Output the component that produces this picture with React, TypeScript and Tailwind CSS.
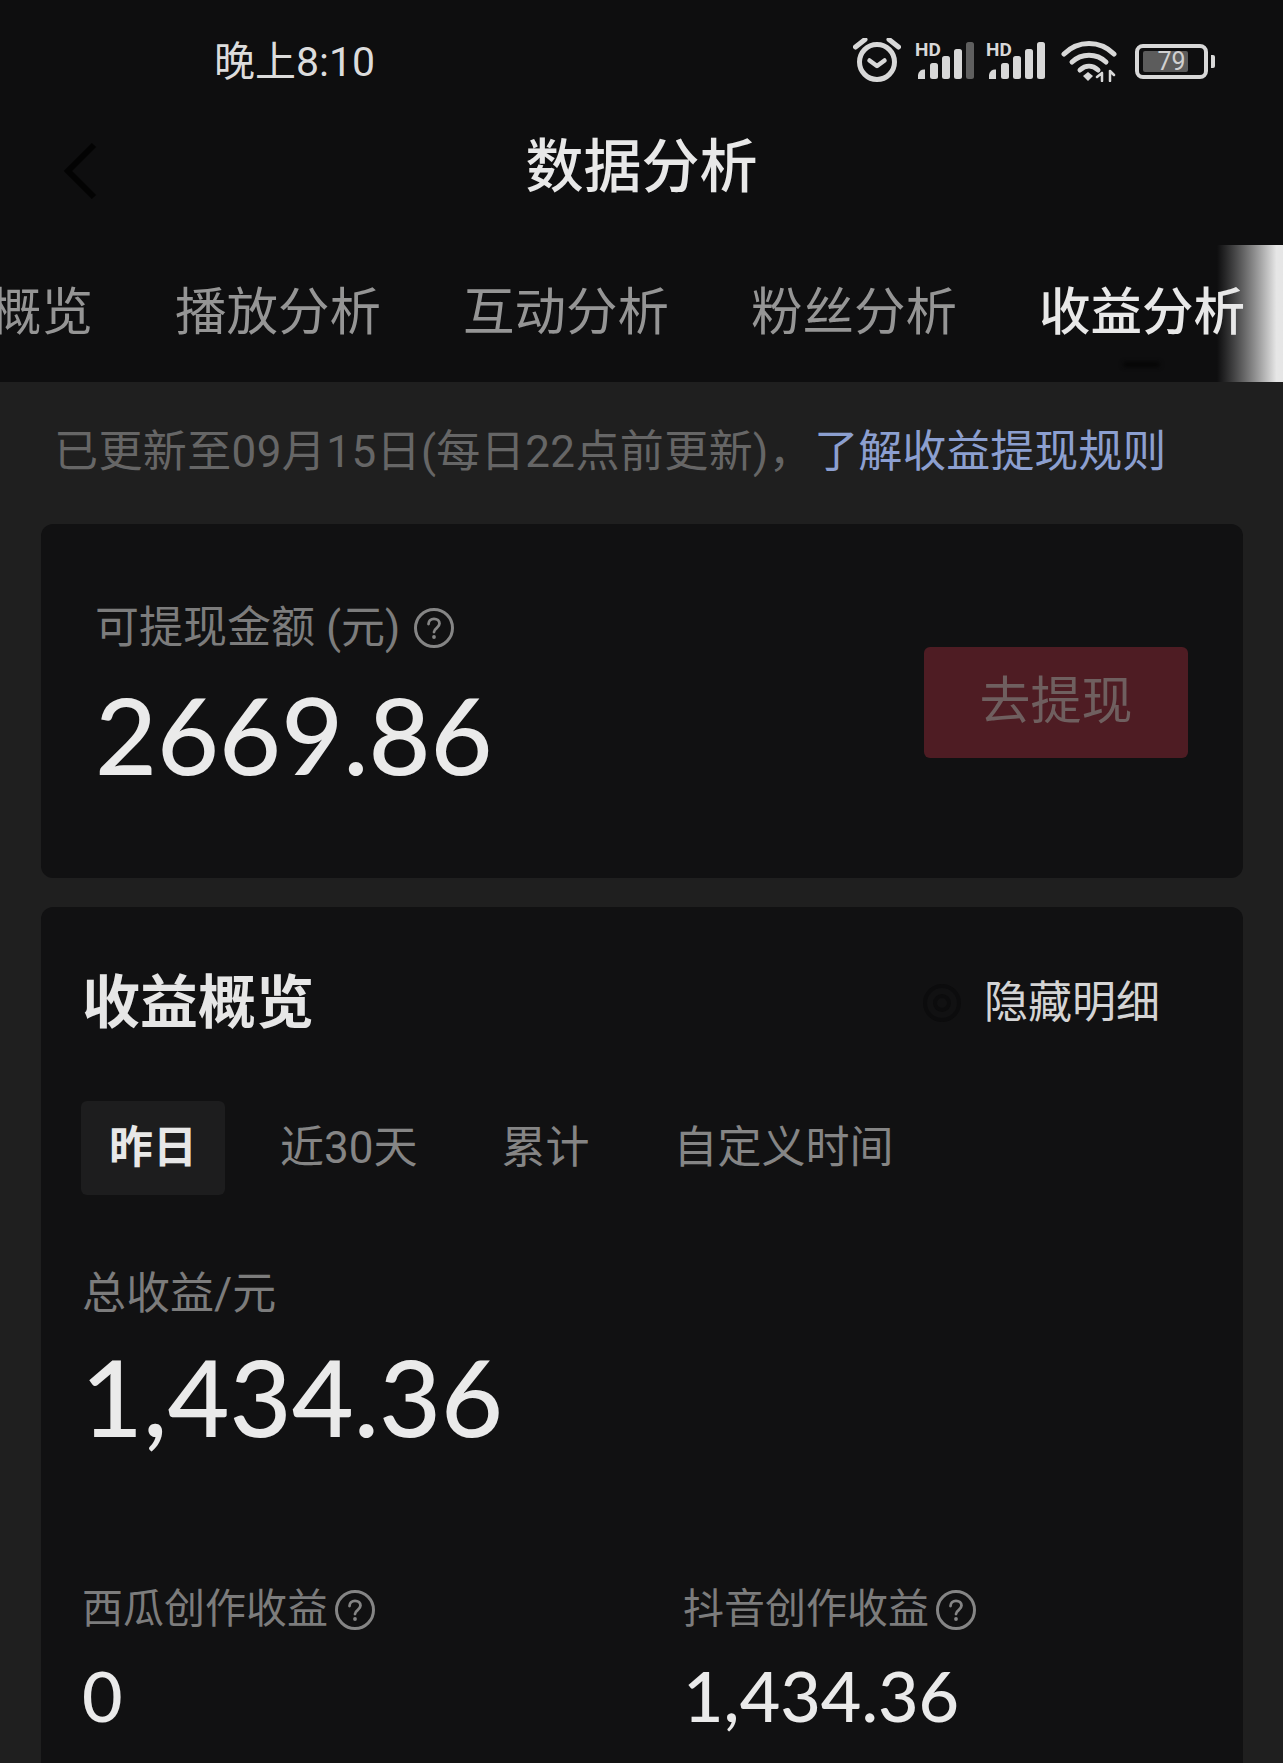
const cjk = "font-['Roboto','Noto_Sans_CJK_SC',sans-serif]";

function Help({ size = 40 }: { size?: number }) {
  return (
    <svg width={size} height={size} viewBox="0 0 40 40" fill="none" className="shrink-0">
      <circle cx="20" cy="20" r="18.500" stroke="#858585" strokeWidth="3" />
      <path d="M14.500 16c0-3.200 2.400-5.200 5.500-5.200s5.500 2 5.500 4.800c0 4.400-5.500 4.400-5.500 8.400" stroke="#858585" strokeWidth="2.800" strokeLinecap="round" />
      <circle cx="20" cy="29" r="1.900" fill="#858585" />
    </svg>
  );
}

function Signal({ dim }: { dim?: boolean }) {
  return (
    <svg width="60" height="38" viewBox="0 0 60 38" className="overflow-visible">
      <text x="0" y="14" fontFamily="Roboto, sans-serif" fontWeight="700" fontSize="19" fill="#d8d8d8">HD</text>
      <path d="M3 37v-4a6 6 0 0 1 7-5.500V37z" fill="#d8d8d8" />
      <rect x="15" y="21" width="8" height="16" rx="2.500" fill="#d8d8d8" />
      <rect x="27" y="14" width="8" height="23" rx="2.500" fill="#d8d8d8" />
      <rect x="39" y="7" width="8" height="30" rx="2.500" fill="#d8d8d8" />
      <rect x="51" y="0" width="8" height="37" rx="2.500" fill={dim ? "#5f5f5f" : "#d8d8d8"} />
    </svg>
  );
}

function StatusIcons() {
  return (
    <div className="flex items-center">
      <svg width="48" height="46" viewBox="0 2 48 46" fill="none" stroke="#d8d8d8" strokeLinecap="round">
        <circle cx="24" cy="26" r="17.500" strokeWidth="5" />
        <path d="M16.500 24.500 24 30l7.500-5.500" strokeWidth="4.500" strokeLinejoin="round" />
        <path d="M2.500 11 12 3.500M45.500 11 36 3.500" strokeWidth="5" />
      </svg>
      <div className="ml-[14px]"><Signal dim /></div>
      <div className="ml-[11px]"><Signal /></div>
      <svg className="ml-[15px]" width="56" height="42" viewBox="0 0 56 42" fill="none" stroke="#d8d8d8" strokeLinecap="round">
        <path d="M3 14C17 0 39 0 53 14" strokeWidth="5" />
        <path d="M11 22c9.500-9 24.500-9 34 0" strokeWidth="5" />
        <path d="M19 30c5.500-5 12.500-5 18 0" strokeWidth="5" />
        <path d="M22 36l5-4 5 4-5 5z" fill="#d8d8d8" stroke="none" />
        <path d="M41 33v8M36 37l5-4M49 31v10M49 31l4 4" strokeWidth="2.500" />
      </svg>
      <div className="relative ml-[18px] w-[73px] h-[35px] rounded-[8px] border-[4px] border-[#d8d8d8] flex items-center justify-center">
        <div className="absolute left-[4px] top-[3px] bottom-[3px] w-[45px] rounded-[2px] bg-[#5c5c5c]" />
        <span className="relative font-['Roboto',sans-serif] text-[25px] leading-none text-[#d0d0d0]">79</span>
      </div>
      <div className="ml-[3px] w-[4px] h-[13px] rounded-r-[2px] bg-[#d8d8d8]" />
    </div>
  );
}

const topTabs = ["播放分析", "互动分析", "粉丝分析"];
const rangeTabs = ["近30天", "累计", "自定义时间"];

export default function App() {
  return (
    <div className={`${cjk} w-[1283px] h-[1763px] overflow-hidden bg-[#1f1f1f]`}>
      <header className="bg-[#0e0e0f]">
        <div className="h-[122px] pl-[214px] pr-[68px] flex items-center justify-between">
          <span className="pt-[2px] text-[41px] leading-none text-[#dcdcdc]">晚上8:10</span>
          <StatusIcons />
        </div>
        <div className="relative h-[90px] flex items-center justify-center">
          <svg className="absolute left-[62px] top-[20px]" width="36" height="58" viewBox="0 0 36 58" fill="none">
            <path d="M32 3 6 29l26 26" stroke="#030303" strokeWidth="6" />
          </svg>
          <h1 className="text-[58px] leading-none font-medium text-[#e8e8e8]">数据分析</h1>
        </div>
        <div className="relative h-[170px] pt-[71px] overflow-hidden">
          <div className="absolute left-[1123px] top-[150px] w-[37px] h-[5px] rounded-full bg-[#050505] blur-[2px]" />
          <div className="absolute right-0 top-[33px] bottom-0 w-[66px] bg-gradient-to-r from-[#0e0e0f] to-[#e6e6e6] to-[90%]" />
          <div className="relative flex gap-[82px] -ml-[10px] text-[51.500px] leading-[60px] text-[#959595] whitespace-nowrap">
            <span>概览</span>
            {topTabs.map((t) => (
              <span key={t}>{t}</span>
            ))}
            <span className="font-medium text-[#e8e8e8]">收益分析</span>
          </div>
        </div>
      </header>

      <main className="pl-[41px] pr-[40px]">
        <p className="h-[142px] pt-[40px] pl-[13px] text-[44px] leading-[60px] tracking-[0.4px] text-[#666666] whitespace-nowrap">
          已更新至09月15日(每日22点前更新)，<span className="ml-[1px] tracking-normal text-[#8c9fd0]">了解收益提现规则</span>
        </p>

        <section className="h-[354px] rounded-[12px] bg-[#111112] pl-[54px] pr-[55px] flex items-start justify-between">
          <div>
            <div className="mt-[74px] h-[60px] flex items-center gap-[14px] text-[44px] text-[#7c7c7c] whitespace-nowrap">
              可提现金额 (元) <Help />
            </div>
            <div className="mt-[26px] font-['Lato',sans-serif] text-[107px] leading-[100px] font-medium text-[#eaeaea]">2669.86</div>
          </div>
          <button className="mt-[123px] w-[264px] h-[111px] rounded-[6px] bg-[#4e1c23] text-[51px] text-[#6f5f5f]">
            去提现
          </button>
        </section>

        <section className="mt-[29px] h-[900px] rounded-[12px] bg-[#111112] pt-[61px]">
          <div className="h-[70px] pl-[41px] pr-[83px] flex items-center justify-between">
            <h2 className="text-[58px] leading-none font-bold text-[#e6e6e6]">收益概览</h2>
            <div className="flex items-center gap-[22px] text-[44px] text-[#d4d4d4]">
              <svg width="40" height="40" viewBox="0 0 40 40" fill="none" stroke="#0c0c0d" strokeWidth="4">
                <circle cx="20" cy="20" r="17" />
                <circle cx="20" cy="20" r="7" />
              </svg>
              隐藏明细
            </div>
          </div>

          <div className="mt-[63px] ml-[40px] flex gap-[26px] text-[44px] leading-[94px] text-[#858585]">
            <span className="h-[94px] px-[28px] rounded-[6px] bg-[#1d1d1e] font-bold text-[#e8e8e8]">昨日</span>
            {rangeTabs.map((t) => (
              <span key={t} className="px-[29px]">{t}</span>
            ))}
          </div>

          <div className="mt-[69px] pl-[41px] text-[44px] leading-[60px] text-[#7c7c7c]">总收益/元</div>
          <div className="mt-[12px] pl-[40px] font-['Lato',sans-serif] text-[107px] leading-[120px] font-medium text-[#eaeaea]">1,434.36</div>

          <div className="mt-[124px] pl-[41px] flex">
            <div className="w-[601px]">
              <div className="h-[60px] flex items-center gap-[7px] text-[41px] text-[#7c7c7c]">
                西瓜创作收益 <Help size={40} />
              </div>
              <div className="mt-[15px] font-['Lato',sans-serif] text-[70px] leading-[80px] font-medium text-[#eaeaea]">0</div>
            </div>
            <div>
              <div className="h-[60px] flex items-center gap-[7px] text-[41px] text-[#7c7c7c]">
                抖音创作收益 <Help size={40} />
              </div>
              <div className="mt-[15px] font-['Lato',sans-serif] text-[70px] leading-[80px] font-medium text-[#eaeaea]">1,434.36</div>
            </div>
          </div>
        </section>
      </main>
    </div>
  );
}
